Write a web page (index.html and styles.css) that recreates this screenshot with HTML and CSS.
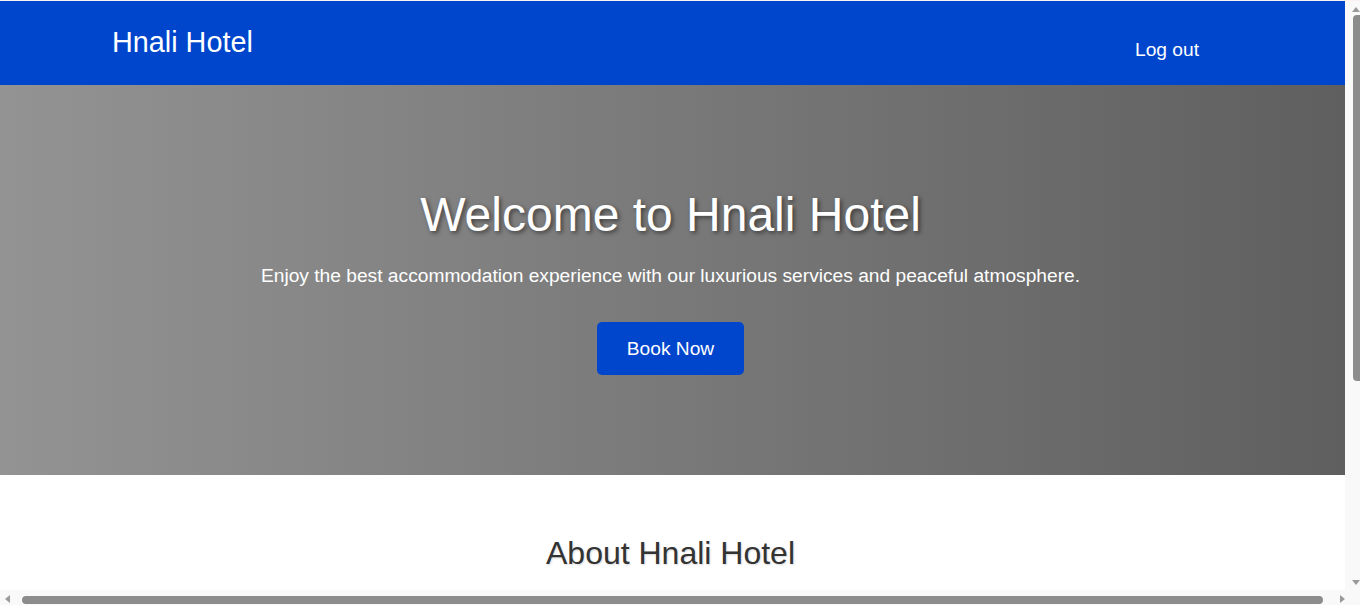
FILE: index.html
```html
<!DOCTYPE html>
<html lang="en">
<head>
<meta charset="utf-8">
<title>Hnali Hotel</title>
<link rel="stylesheet" href="styles.css">
</head>
<body>
<div class="frame">
  <div class="page">
    <header class="site-header">
      <h1 class="brand">Hnali Hotel</h1>
      <nav class="nav"><a class="nav-link" href="#">Log out</a></nav>
    </header>
    <section class="hero">
      <h2 class="hero-title">Welcome to Hnali Hotel</h2>
      <p class="hero-text">Enjoy the best accommodation experience with our luxurious services and peaceful atmosphere.</p>
      <a class="btn" href="#">Book Now</a>
    </section>
    <section class="about">
      <h2 class="about-title">About Hnali Hotel</h2>
    </section>
  </div>
  <div class="vscroll">
    <span class="arrow arrow-up"></span>
    <span class="vthumb"></span>
    <span class="vspace"></span>
    <span class="arrow arrow-down"></span>
  </div>
  <div class="hscroll">
    <span class="arrow arrow-left"></span>
    <span class="hthumb"></span>
    <span class="arrow arrow-right"></span>
  </div>
  <div class="corner"></div>
</div>
</body>
</html>
```
FILE: styles.css
```css
html, body {
  margin: 0;
  padding: 0;
}
body {
  font-family: "Liberation Sans", Arial, sans-serif;
  background: #ffffff;
  border-top: 1px solid #fbf1f1;
  color: #333;
  height: 100vh;
  box-sizing: border-box;
  overflow: hidden;
}
.frame {
  display: grid;
  grid-template-columns: 1fr 15px;
  grid-template-rows: 1fr 15px;
  height: 100%;
}
.page {
  overflow: hidden;
  min-width: 0;
  min-height: 0;
}
.site-header {
  background: #0046cc;
  color: #fff;
  display: flex;
  justify-content: space-between;
  align-items: flex-start;
  height: 84px;
  box-sizing: border-box;
  padding: 25px 146px 0 112px;
}
.brand {
  margin: 0;
  font-size: 28.8px;
  font-weight: normal;
  line-height: 33px;
}
.nav-link {
  display: block;
  color: #fff;
  text-decoration: none;
  font-size: 19.2px;
  line-height: 22px;
  padding-top: 13px;
}
.hero {
  background: linear-gradient(to right, #939393, #5f5f5f);
  color: #fff;
  text-align: center;
  height: 390px;
  box-sizing: border-box;
  padding: 102px 24px 0 20px;
}
.hero-title {
  margin: 0 0 23px;
  font-size: 48px;
  font-weight: normal;
  line-height: 55px;
  text-shadow: 2px 2px 4px rgba(0, 0, 0, 0.5);
}
.hero-text {
  margin: 0 0 35px;
  font-size: 19.2px;
  line-height: 22px;
}
.btn {
  display: inline-block;
  background: #0046cc;
  color: #fff;
  text-decoration: none;
  font-size: 19.2px;
  line-height: 23px;
  padding: 15px 30px;
  border-radius: 5px;
}
.about {
  text-align: center;
  padding: 60px 24px 40px 20px;
}
.about-title {
  margin: 0;
  font-size: 32px;
  font-weight: normal;
  line-height: 37px;
  color: #333;
  text-shadow: 1px 1px 2px rgba(0, 0, 0, 0.15);
}

/* scrollbars */
.vscroll,
.hscroll,
.corner {
  background: #f9f9f9;
}
.vscroll {
  display: flex;
  flex-direction: column;
  align-items: flex-end;
}
.vthumb {
  width: 7px;
  height: 366px;
  margin-top: 3px;
  background: #8c8c8c;
  border-radius: 4px 0 0 4px;
}
.vspace {
  flex: 1;
}
.hscroll {
  display: flex;
  align-items: flex-end;
  padding-bottom: 1px;
}
.hthumb {
  flex: 1;
  height: 8px;
  margin: 0 17px 0 12px;
  background: #8c8c8c;
  border-radius: 4px;
}
.arrow {
  display: block;
  width: 0;
  height: 0;
}
.arrow-up {
  margin: 6px 0 0;
  border-left: 4px solid transparent;
  border-right: 4px solid transparent;
  border-bottom: 5px solid #9a9a9a;
}
.arrow-down {
  margin: 0 0 5px;
  border-left: 4px solid transparent;
  border-right: 4px solid transparent;
  border-top: 5px solid #9a9a9a;
}
.arrow-left {
  margin: 0 0 1px 5px;
  border-top: 4px solid transparent;
  border-bottom: 4px solid transparent;
  border-right: 5px solid #9a9a9a;
}
.arrow-right {
  margin: 0 0 1px 0;
  border-top: 4px solid transparent;
  border-bottom: 4px solid transparent;
  border-left: 5px solid #9a9a9a;
}
```
